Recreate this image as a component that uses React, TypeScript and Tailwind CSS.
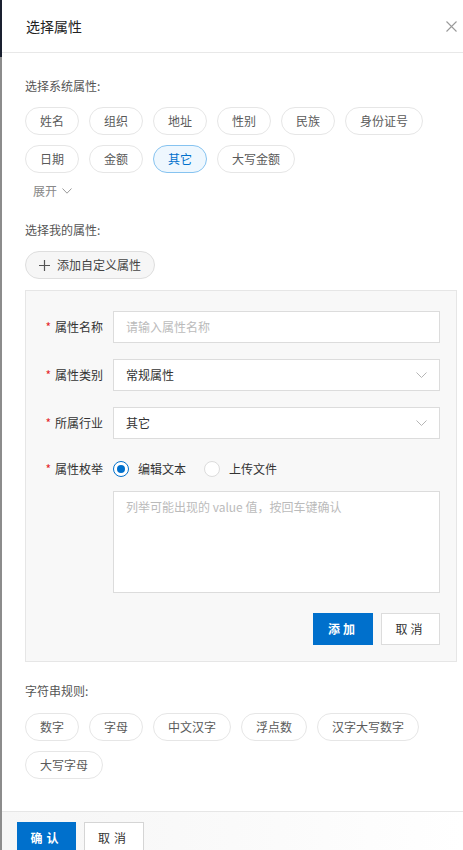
import { useState } from "react";

const SYSTEM_TAGS = ["姓名", "组织", "地址", "性别", "民族", "身份证号", "日期", "金额", "其它", "大写金额"];
const STRING_RULES = ["数字", "字母", "中文汉字", "浮点数", "汉字大写数字", "大写字母"];

const Chevron = () => (
  <svg width="11" height="6" viewBox="0 0 11 6" fill="none">
    <path d="M0.5 0.5L5.5 5.5L10.5 0.5" stroke="#b5b5b5" strokeWidth="1" />
  </svg>
);

const Tag = ({ label, active, onClick }: { label: string; active?: boolean; onClick?: () => void }) => (
  <button
    onClick={onClick}
    className={`h-[28px] px-[14px] rounded-full border text-[12px] leading-none ${
      active ? "border-[#86c3f0] bg-[#eef7fe] text-[#0070cc]" : "border-[#e6e6e6] bg-white text-[#5a5a5a]"
    }`}
  >
    {label}
  </button>
);

const FieldLabel = ({ text }: { text: string }) => (
  <label className="w-[87px] shrink-0 flex items-center justify-end pr-[10px] text-[12px] text-[#333]">
    <span className="text-[#e5262d] mr-[4px] text-[12px]">*</span>
    {text}
  </label>
);

const Radio = ({ checked, label, onClick }: { checked: boolean; label: string; onClick: () => void }) => (
  <button onClick={onClick} className="flex items-center gap-[9px] text-[12px] text-[#333]">
    <span
      className={`w-[16px] h-[16px] rounded-full border flex items-center justify-center bg-white ${
        checked ? "border-[#0070cc]" : "border-[#dcdcdc]"
      }`}
    >
      {checked && <span className="w-[8px] h-[8px] rounded-full bg-[#0070cc]" />}
    </span>
    {label}
  </button>
);

const App = () => {
  const [selected, setSelected] = useState("其它");
  const [mode, setMode] = useState<"text" | "file">("text");

  return (
    <div
      className="flex w-[463px] min-h-[850px] bg-white"
      style={{ fontFamily: '"Noto Sans CJK SC", "Noto Sans", sans-serif' }}
    >
      <div className="w-[2px] shrink-0 flex flex-col">
        <div className="h-[57px] bg-[#1a2030]" />
        <div className="flex-1 bg-[#8c8c8c]" />
      </div>

      <div className="flex-1 flex flex-col">
        <div className="h-[53px] shrink-0 flex items-center justify-between pl-[24px] pr-[5px] border-b border-[#e8e8e8]">
          <h2 className="text-[14px] text-[#222]">选择属性</h2>
          <button className="p-[1px]">
            <svg width="11" height="11" viewBox="0 0 11 11" fill="none">
              <path d="M0.5 0.5L10.5 10.5M10.5 0.5L0.5 10.5" stroke="#9a9a9a" strokeWidth="1.1" />
            </svg>
          </button>
        </div>

        <div className="flex-1 pl-[23px] pr-[6px]">
          <p className="mt-[24px] text-[12px] leading-[18px] text-[#555]">选择系统属性:</p>
          <div className="mt-[12px] flex flex-wrap gap-[10px]">
            {SYSTEM_TAGS.map((t) => (
              <Tag key={t} label={t} active={selected === t} onClick={() => setSelected(t)} />
            ))}
          </div>
          <button className="mt-[9px] ml-[8px] flex items-center gap-[5px] text-[12px] leading-[18px] text-[#888]">
            展开
            <svg width="10" height="6" viewBox="0 0 10 6" fill="none">
              <path d="M0.5 0.5L5 5.2L9.5 0.5" stroke="#999" strokeWidth="1" />
            </svg>
          </button>

          <p className="mt-[21px] text-[12px] leading-[18px] text-[#555]">选择我的属性:</p>
          <button className="mt-[12px] h-[28px] px-[13px] flex items-center gap-[7px] rounded-full border border-[#dedede] bg-[#f6f6f6] text-[12px] text-[#444]">
            <svg width="11" height="11" viewBox="0 0 11 11" fill="none">
              <path d="M5.5 0V11M0 5.5H11" stroke="#555" strokeWidth="1.2" />
            </svg>
            添加自定义属性
          </button>

          <div className="mt-[11px] border border-[#e6e6e6] bg-[#f8f8f8] pt-[20px] pb-[16px] pr-[16px]">
            <div className="flex h-[32px]">
              <FieldLabel text="属性名称" />
              <input
                placeholder="请输入属性名称"
                className="flex-1 min-w-0 border border-[#dcdcdc] bg-white px-[12px] text-[12px] text-[#333] placeholder:text-[#bbb] outline-none"
              />
            </div>
            <div className="mt-[16px] flex h-[32px]">
              <FieldLabel text="属性类别" />
              <div className="flex-1 flex items-center justify-between border border-[#dcdcdc] bg-white pl-[12px] pr-[12px] text-[12px] text-[#333]">
                常规属性
                <Chevron />
              </div>
            </div>
            <div className="mt-[16px] flex h-[32px]">
              <FieldLabel text="所属行业" />
              <div className="flex-1 flex items-center justify-between border border-[#dcdcdc] bg-white pl-[12px] pr-[12px] text-[12px] text-[#333]">
                其它
                <Chevron />
              </div>
            </div>
            <div className="mt-[16px] flex h-[28px]">
              <FieldLabel text="属性枚举" />
              <div className="flex items-center gap-[18px]">
                <Radio checked={mode === "text"} label="编辑文本" onClick={() => setMode("text")} />
                <Radio checked={mode === "file"} label="上传文件" onClick={() => setMode("file")} />
              </div>
            </div>
            <div className="mt-[8px] pl-[87px]">
              <textarea
                placeholder="列举可能出现的 value 值，按回车键确认"
                className="block w-full h-[102px] resize-none border border-[#dcdcdc] bg-white px-[12px] py-[6px] text-[12px] leading-[18px] text-[#333] placeholder:text-[#bbb] outline-none"
              />
            </div>
            <div className="mt-[20px] flex justify-end gap-[8px]">
              <button className="w-[60px] h-[32px] bg-[#0070cc] text-white text-[12px] font-bold tracking-[3px]">添加</button>
              <button className="w-[59px] h-[32px] border border-[#dcdcdc] bg-white text-[#333] text-[12px] tracking-[3px]">取消</button>
            </div>
          </div>

          <p className="mt-[20px] text-[12px] leading-[18px] text-[#555]">字符串规则:</p>
          <div className="mt-[13px] flex flex-wrap gap-[10px]">
            {STRING_RULES.map((t) => (
              <Tag key={t} label={t} />
            ))}
          </div>
        </div>

        <div className="mt-[32px] border-t border-[#e6e6e6] bg-gradient-to-r from-[#f6f6f6] via-[#fafafa] to-white pl-[15px] pt-[10px] pb-[8px] flex gap-[8px]">
          <button className="w-[59px] h-[32px] bg-[#0070cc] text-white text-[12px] font-bold tracking-[4px]">确认</button>
          <button className="w-[60px] h-[32px] border border-[#d5d5d5] bg-white text-[#333] text-[12px] tracking-[4px]">取消</button>
        </div>
      </div>
    </div>
  );
};

export default App;
